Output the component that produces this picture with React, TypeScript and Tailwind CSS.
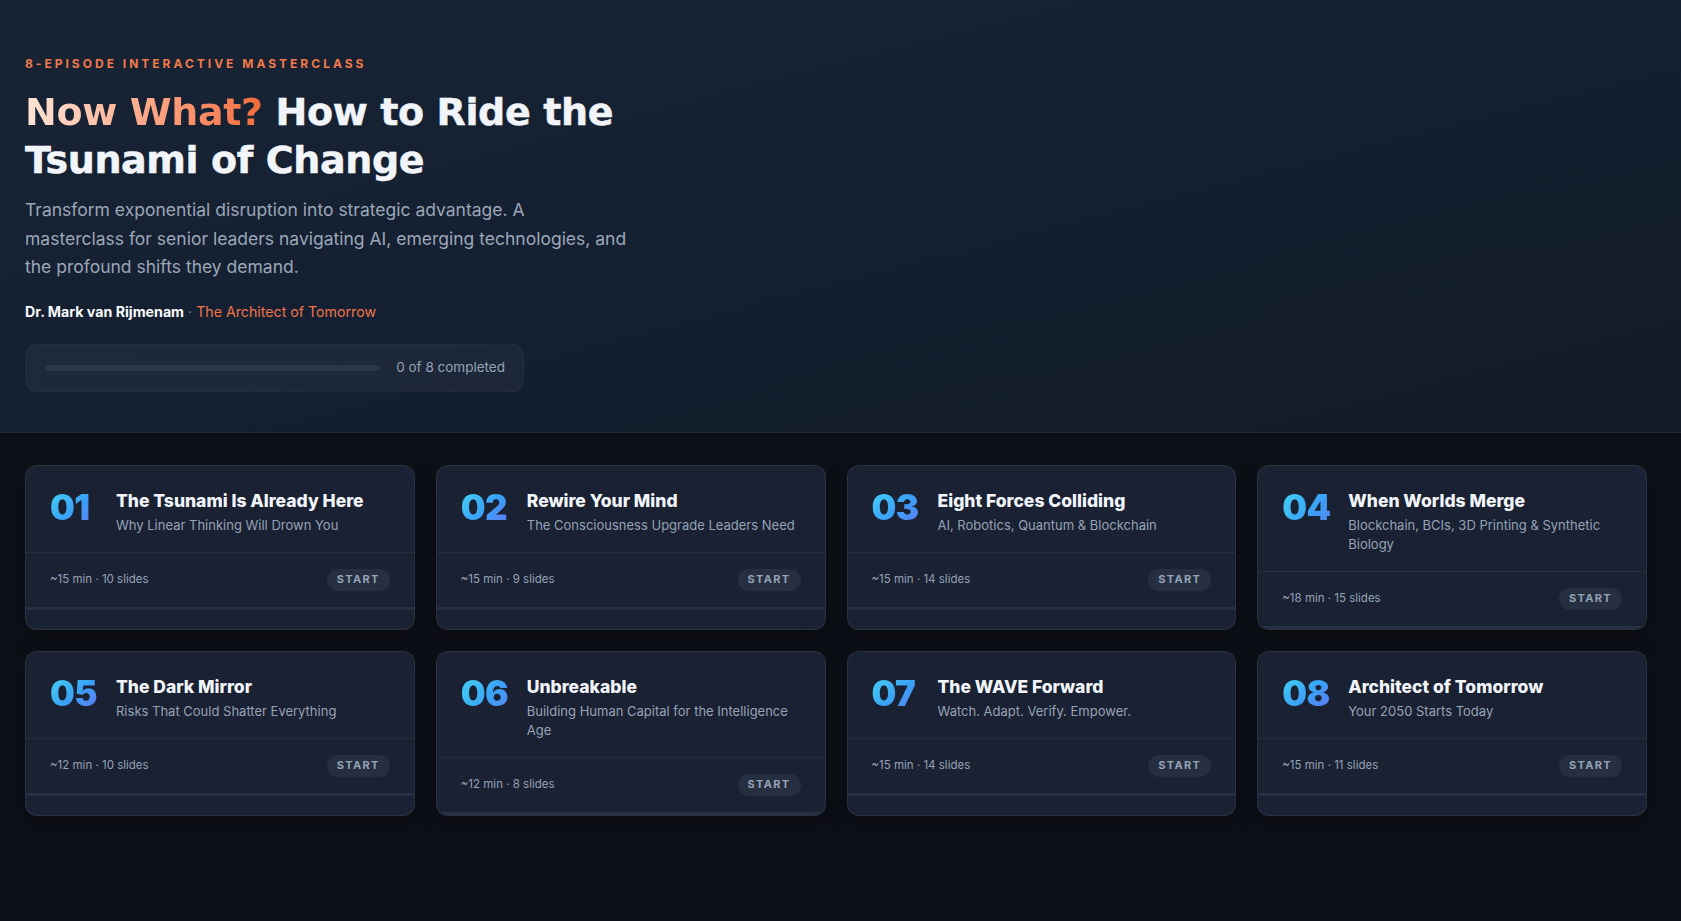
const episodes = [
  { n: '01', title: 'The Tsunami Is Already Here', sub: 'Why Linear Thinking Will Drown You', meta: '~15 min · 10 slides' },
  { n: '02', title: 'Rewire Your Mind', sub: 'The Consciousness Upgrade Leaders Need', meta: '~15 min · 9 slides' },
  { n: '03', title: 'Eight Forces Colliding', sub: 'AI, Robotics, Quantum & Blockchain', meta: '~15 min · 14 slides' },
  { n: '04', title: 'When Worlds Merge', sub: 'Blockchain, BCIs, 3D Printing & Synthetic Biology', meta: '~18 min · 15 slides' },
  { n: '05', title: 'The Dark Mirror', sub: 'Risks That Could Shatter Everything', meta: '~12 min · 10 slides' },
  { n: '06', title: 'Unbreakable', sub: 'Building Human Capital for the Intelligence Age', meta: '~12 min · 8 slides' },
  { n: '07', title: 'The WAVE Forward', sub: 'Watch. Adapt. Verify. Empower.', meta: '~15 min · 14 slides' },
  { n: '08', title: 'Architect of Tomorrow', sub: 'Your 2050 Starts Today', meta: '~15 min · 11 slides' },
]

const EpisodeCard = ({ n, title, sub, meta }: { n: string; title: string; sub: string; meta: string }) => {
  return (
    <div className="flex flex-col rounded-xl border border-white/[0.07] bg-[#1a2132] overflow-hidden shadow-[0_8px_20px_rgba(0,0,0,0.35)]">
      <div className="flex gap-4 pl-6 pr-5 pt-[23px] pb-[17px]">
        <div className="w-[50px] shrink-0 pt-[1px] text-[35px] font-black leading-none tracking-[-0.02em] bg-gradient-to-br from-[#45d4f3] via-[#3b9ef6] to-[#6366f1] bg-clip-text text-transparent">
          {n}
        </div>
        <div className="flex flex-col">
          <h3 className="text-[17.5px] font-extrabold leading-6 text-[#f1f5f9]">{title}</h3>
          <p className="mt-[3px] text-[13px] leading-[19px] text-[#94a3b8]">{sub}</p>
        </div>
      </div>
      <div className="flex items-center justify-between border-t border-white/[0.06] px-6 py-4">
        <span className="text-[11.5px] text-[#94a3b8]">{meta}</span>
        <span className="flex h-[22px] items-center rounded-full bg-[#262f40] px-[10px] text-[11px] font-bold tracking-[0.12em] text-[#94a3b8]">
          START
        </span>
      </div>
      <div className="h-[3px] bg-[#263043]"></div>
    </div>
  )
}

const App = () => {
  return (
    <div className="min-h-screen w-full bg-[#0e1018] font-['Inter',sans-serif]">
      <section className="border-b border-[#1f2a38] bg-gradient-to-br from-[#182334] via-[#142031] to-[#111a27] px-[25px] pt-[56px] pb-[40px]">
        <div className="text-[12px] font-bold uppercase leading-4 tracking-[0.25em] text-[#f07a4a]">
          8-Episode Interactive Masterclass
        </div>
        <h1 className="mt-4 max-w-[660px] font-['DejaVu_Sans',sans-serif] text-[38px] font-bold leading-[48px] tracking-[-0.01em] text-[#f1f5f9] [-webkit-text-stroke:0.5px_#f1f5f9]">
          <span className="bg-gradient-to-r from-[#fde4d6] to-[#f26a38] bg-clip-text text-transparent [-webkit-text-stroke:0]">Now What?</span> How to Ride the
          <br />
          Tsunami of Change
        </h1>
        <p className="mt-3 max-w-[660px] text-[17.5px] leading-[28.5px] text-[#9ba7b8]">
          Transform exponential disruption into strategic advantage. A
          <br />
          masterclass for senior leaders navigating AI, emerging technologies, and
          <br />
          the profound shifts they demand.
        </p>
        <div className="mt-5 text-[14.2px] leading-5">
          <span className="font-bold text-[#f8fafc]">Dr. Mark van Rijmenam</span>
          <span className="text-[#7c8799]"> · </span>
          <span className="text-[#ef7448]">The Architect of Tomorrow</span>
        </div>
        <div className="mt-[22px] flex h-12 w-[499px] items-center gap-4 rounded-xl border border-white/[0.03] bg-white/[0.04] pl-5 pr-[18px]">
          <div className="h-[6px] flex-1 rounded-full bg-[#2b3847]"></div>
          <span className="whitespace-nowrap text-[13.5px] text-[#94a3b8]">0 of 8 completed</span>
        </div>
      </section>
      <section className="grid grid-cols-4 gap-[21px] pt-8 pb-16 pl-[25px] pr-[34px]">
        {episodes.map((e) => (
          <EpisodeCard key={e.n} {...e} />
        ))}
      </section>
    </div>
  )
}

export default App
